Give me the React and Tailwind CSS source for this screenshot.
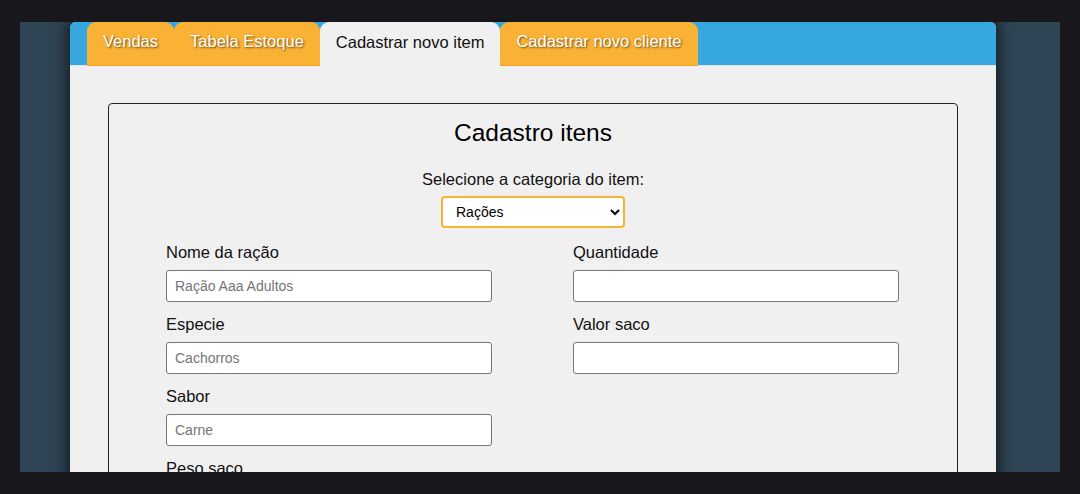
import React, { useState } from "react";

const tabs = ["Vendas", "Tabela Estoque", "Cadastrar novo item", "Cadastrar novo cliente"];

const Field = ({ label, placeholder }) => (
  <div className="flex flex-col">
    <label className="text-[16.5px] leading-[17px] text-[#111] mb-[9px]">{label}</label>
    <input
      type="text"
      placeholder={placeholder}
      className="w-[326px] h-8 bg-white border border-[#767676] rounded-[3px] px-2 text-sm text-black placeholder:text-[#757575] mb-[14px]"
    />
  </div>
);

const App = () => {
  const [active, setActive] = useState(2);
  const [category, setCategory] = useState("racoes");

  return (
    <div
      className="w-[1080px] h-[494px] bg-[#18171c] px-5 py-[22px] overflow-hidden"
      style={{ fontFamily: '"Liberation Sans", Arial, sans-serif' }}
    >
      <div className="h-[450px] bg-[#2f4555] overflow-hidden pl-[50px]">
        <div className="w-[926px] h-[600px] bg-[#f0f0f0] rounded-t-md shadow-[0_0_14px_4px_rgba(0,0,0,0.55)]">
          {/* tabs */}
          <div className="h-11 bg-[#36a8df] rounded-t-md flex pl-[17px] border-b border-[#e4e4e4]">
            {tabs.map((tab, i) =>
              i === active ? (
                <button
                  key={tab}
                  onClick={() => setActive(i)}
                  className="h-11 px-4 pb-1 bg-[#f0f0f0] rounded-t-[9px] text-[16.5px] text-[#111]"
                >
                  {tab}
                </button>
              ) : (
                <button
                  key={tab}
                  onClick={() => setActive(i)}
                  className="h-11 px-4 pb-1 bg-[#fab234] rounded-t-[9px] text-[16.5px] text-white border-b border-[#e99e2a] [text-shadow:1px_1px_2px_rgba(0,0,0,0.6)]"
                >
                  {tab}
                </button>
              )
            )}
          </div>

          {/* form box */}
          <div className="mx-[38px] mt-[37px] border border-[#222] rounded-[4px] h-[500px] pt-[15px]">
            <h1 className="text-[24.5px] leading-[28px] text-center text-black">Cadastro itens</h1>
            <p className="text-[16.5px] leading-[18px] text-center text-[#111] mt-[23px]">
              Selecione a categoria do item:
            </p>
            <div className="flex justify-center mt-2">
              <select
                value={category}
                onChange={(e) => setCategory(e.target.value)}
                className="w-[184px] h-8 bg-white border-2 border-[#f9b233] rounded-[4px] pl-[9px] pr-1 text-sm text-black"
              >
                <option value="racoes">Rações</option>
                <option value="acessorios">Acessórios</option>
                <option value="medicamentos">Medicamentos</option>
              </select>
            </div>

            <div className="flex gap-x-[81px] mt-4 pl-[57px]">
              <div className="flex flex-col">
                <Field label="Nome da ração" placeholder="Ração Aaa Adultos" />
                <Field label="Especie" placeholder="Cachorros" />
                <Field label="Sabor" placeholder="Carne" />
                <Field label="Peso saco" placeholder="15kg" />
              </div>
              <div className="flex flex-col">
                <Field label="Quantidade" placeholder="" />
                <Field label="Valor saco" placeholder="" />
              </div>
            </div>
          </div>
        </div>
      </div>
    </div>
  );
};

export default App;
